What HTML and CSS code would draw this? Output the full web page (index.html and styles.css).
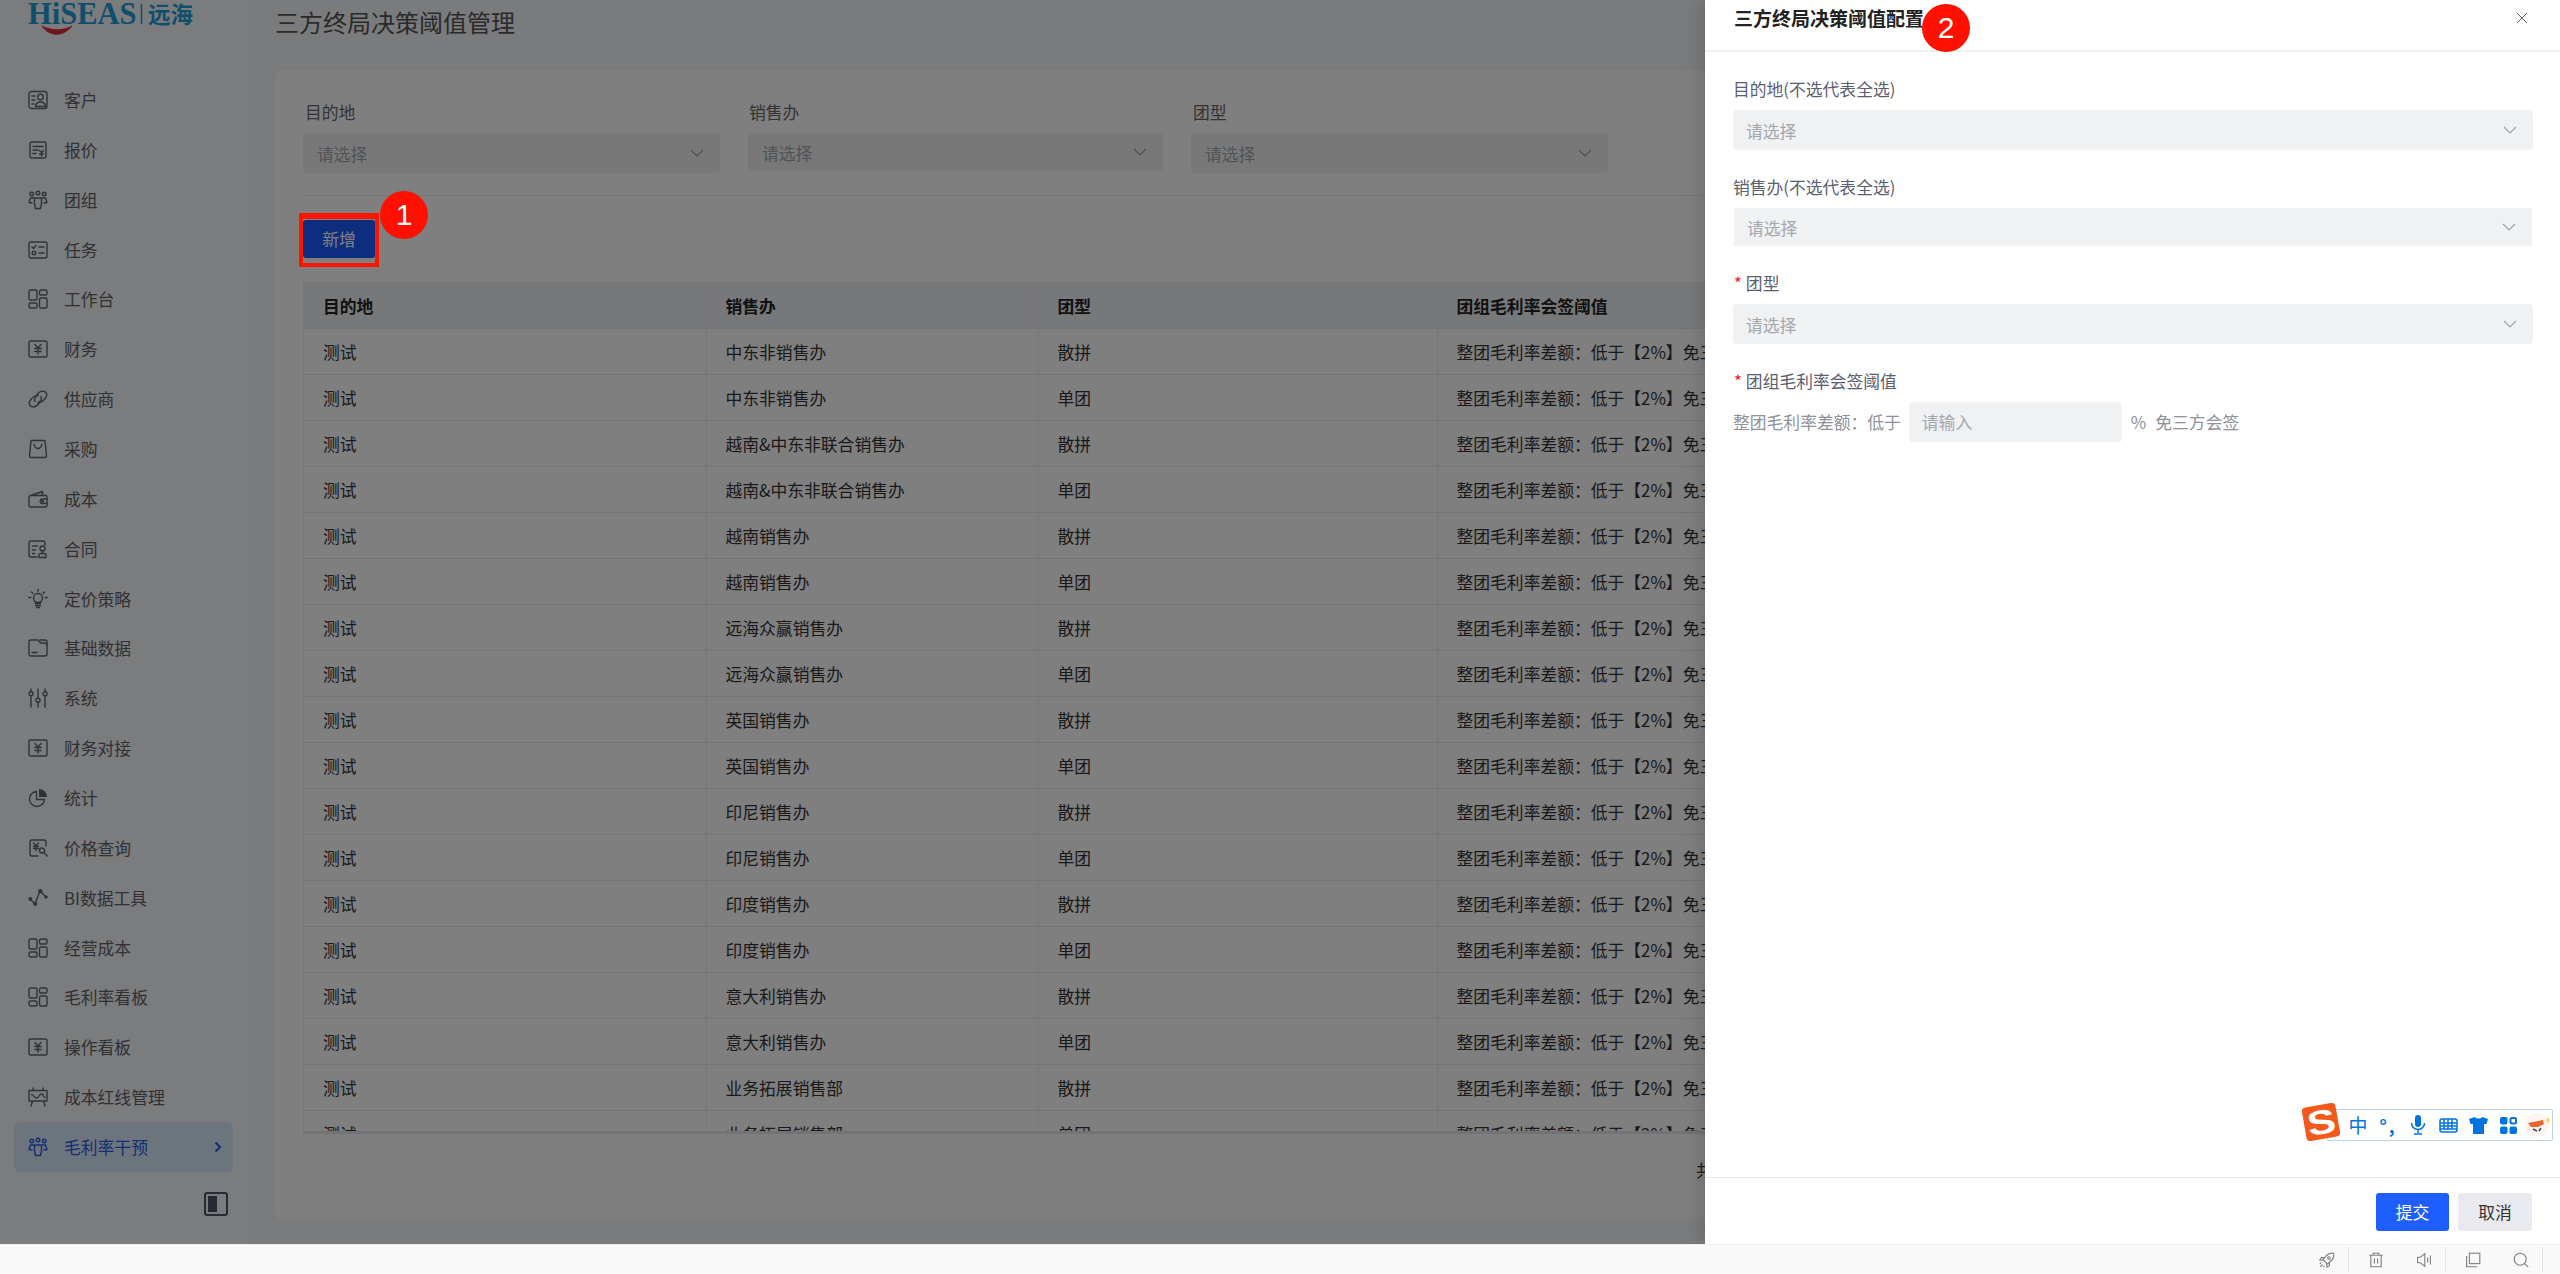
FILE: index.html
```html
<!DOCTYPE html>
<html lang="zh-CN">
<head>
  <meta charset="UTF-8" />
  <title>三方终局决策阈值管理</title>
  <link rel="stylesheet" href="styles.css">
</head>
<body>

<!-- icon set -->
<svg class="sprite" xmlns="http://www.w3.org/2000/svg">
  <symbol id="i-customer" viewBox="0 0 20 20"><rect x="1" y="1.500" width="18" height="17" rx="2.500"/><path d="M4 6h3M4 10h3M4 14h2"/><circle cx="12.500" cy="7" r="2.800"/><path d="M7.500 16.500c.4-3 2.400-4.500 5-4.500s4.600 1.500 5 4.500z"/></symbol>
  <symbol id="i-quote" viewBox="0 0 20 20"><rect x="2" y="2" width="16" height="16" rx="2"/><path d="M5 6.500h10M5 10h5M5 13.500h3M11.500 10.500l2 2 2-2M13.500 12.500v3.500M11.500 14h4"/></symbol>
  <symbol id="i-team" viewBox="0 0 20 20"><circle cx="10" cy="3" r="1.800"/><circle cx="3.800" cy="4" r="1.800"/><circle cx="16.200" cy="4" r="1.800"/><path d="M6.500 8h7v6l-1 4.500h-5l-1-4.500zM6.500 8H2.500L1 12.500l3 .5M13.500 8h4L19 12.500l-3 .5"/></symbol>
  <symbol id="i-task" viewBox="0 0 20 20"><rect x="1" y="2" width="18" height="16" rx="2"/><path d="M4 7l1.500 1.500L8 5.500M11 7h5M11 13h5"/><circle cx="6" cy="13" r="1.800"/></symbol>
  <symbol id="i-board" viewBox="0 0 20 20"><rect x="1" y="1" width="8" height="10" rx="1.500"/><rect x="11.500" y="1" width="7.500" height="5" rx="1.500"/><rect x="1" y="14" width="8" height="5" rx="1.500"/><rect x="11.500" y="9" width="7.500" height="10" rx="1.500"/></symbol>
  <symbol id="i-money" viewBox="0 0 20 20"><rect x="1" y="2" width="18" height="16" rx="1.500"/><path d="M7 5.500l3 3.500 3-3.500M10 9v6M6.800 9.500h6.400M6.800 12.500h6.400"/></symbol>
  <symbol id="i-link" viewBox="0 0 20 20"><path d="M9 5.500C11 3 14 1.500 16.500 2.500s3 4 1 6.500-5 5-7.500 4.500M11 14.500C9 17 6 18.500 3.500 17.500s-3-4-1-6.500 5-5 7.500-4.500"/><path d="M7 12.500c-1.500-2 .5-5 3-6.500M13 7.500c1.500 2-.5 5-3 6.500"/></symbol>
  <symbol id="i-bag" viewBox="0 0 20 20"><path d="M3 1.500h14l1.500 15.500a1.500 1.500 0 0 1-1.500 1.500H3A1.500 1.500 0 0 1 1.500 17z"/><path d="M6 5.500c1 3 2.500 4 4 4s3-1 4-4"/></symbol>
  <symbol id="i-wallet" viewBox="0 0 20 20"><path d="M3 6.500h14.500a1.500 1.500 0 0 1 1.500 1.500v8.500a1.500 1.500 0 0 1-1.500 1.500h-15A1.500 1.500 0 0 1 1 16.500V8.500c0-1 .7-1.700 1.500-2L14.500 2.500V6"/><path d="M19 10h-4.500a2 2 0 0 0 0 4.500H19"/><circle cx="14.700" cy="12.200" r=".8"/></symbol>
  <symbol id="i-contract" viewBox="0 0 20 20"><path d="M17 6V4a2 2 0 0 0-2-2H3a2 2 0 0 0-2 2v12a2 2 0 0 0 2 2h6"/><path d="M4.500 7h5M4.500 11h3M4.500 14.500h2"/><circle cx="14.500" cy="9.500" r="2.500"/><path d="M14.500 12v2M11 18.500v-2.500a1.500 1.500 0 0 1 1.500-1.500h4a1.500 1.500 0 0 1 1.500 1.500v2.500z"/></symbol>
  <symbol id="i-bulb" viewBox="0 0 20 20"><circle cx="10" cy="9" r="4.500"/><path d="M7.500 13v1.500h5V13M7.500 16.500h5M8.500 18.500h3M10 .5v1.700M3.500 3l1.300 1.300M16.500 3l-1.300 1.300M.8 8.500h2M17.200 8.500h2"/></symbol>
  <symbol id="i-folder" viewBox="0 0 20 20"><path d="M1 4a2 2 0 0 1 2-2h7l2.500 3H17a2 2 0 0 1 2 2v9a2 2 0 0 1-2 2H3a2 2 0 0 1-2-2z"/><path d="M12 2h5a2 2 0 0 1 2 2v3M4 14.500h5"/></symbol>
  <symbol id="i-sliders" viewBox="0 0 20 20"><path d="M3 1v2.500M3 8v11M10 1v9M10 14.500V19M17 1v2.500M17 8v11"/><circle cx="3" cy="5.800" r="2"/><circle cx="10" cy="12.300" r="2"/><circle cx="17" cy="5.800" r="2"/></symbol>
  <symbol id="i-pie" viewBox="0 0 20 20"><path d="M8.500 3.500a7.500 7.500 0 1 0 8 8h-8z"/><path class="solid" d="M11 1a8 8 0 0 1 8 8h-8z"/></symbol>
  <symbol id="i-price" viewBox="0 0 20 20"><path d="M18 8V4a2 2 0 0 0-2-2H4a2 2 0 0 0-2 2v12a2 2 0 0 0 2 2h6"/><path d="M5.500 5l2.500 3 2.500-3M8 8v4.500M5.500 8.500h5M5.500 10.500h5"/><circle cx="14" cy="12.500" r="2.500"/><path d="M16 14.500l3.200 3.500"/></symbol>
  <symbol id="i-bi" viewBox="0 0 20 20"><path d="M2 11l5 5 5-13 6 6"/><circle class="solid" cx="2.300" cy="11" r="1.900"/><circle class="solid" cx="7.300" cy="16" r="1.900"/><circle class="solid" cx="12.300" cy="3.200" r="2.200"/><circle class="solid" cx="18" cy="9" r="1.700"/></symbol>
  <symbol id="i-redline" viewBox="0 0 20 20"><path d="M5 1v2.500M15 1v2.500M1 3.500h18V14H1zM4.500 14l-1.500 5M15.500 14l1.500 5"/><path d="M3.500 7.500c1.500-1 2.500 3.500 5 3.500s2.500-4 5-4 1.500 3 3.500 3.500"/></symbol>
  <symbol id="i-rocket" viewBox="0 0 20 20"><path d="M18.500 1.500c-5-.5-8.500 1.500-11 5l-2.500 3 5.500 5.500 3-2.500c3.500-2.500 5.500-6 5-11z"/><circle cx="12.500" cy="7.500" r="1.600"/><path d="M6.500 7H3L1 10l4 .5M13 13.500V17l-3 2-.5-4M1.500 18.500l3-3M1 15l2-2M5 19l2-2"/></symbol>
  <symbol id="i-trash" viewBox="0 0 20 20"><path d="M1.500 4h17M6.500 4V1.500h7V4M3.500 4v14.500h13V4M8 8v6.500M12 8v6.500"/></symbol>
  <symbol id="i-speaker" viewBox="0 0 20 20"><path d="M2 6.500h3.500L11 2v16l-5.500-4.500H2zM14.500 7v6M18 4.500v11"/></symbol>
  <symbol id="i-copy" viewBox="0 0 20 20"><rect x="5.500" y="1.500" width="13" height="13"/><path d="M2 5v13.500h13"/></symbol>
  <symbol id="i-search" viewBox="0 0 20 20"><circle cx="9" cy="9" r="7.500"/><path d="M14.500 14.500l4.500 4.500"/></symbol>
</svg>

<div class="app">

  <aside class="sidebar">
    <div class="logo">
      <svg class="logo-art" width="176" height="40" viewBox="0 0 176 40">
        <text class="logo-en" x="0" y="24">HiSEAS</text>
        <path class="logo-bar" d="M113.500 4v20"/>
        <text class="logo-cn" x="120" y="23">远海</text>
        <path class="logo-smile" d="M14 26c8 11 21 11 30 0-8 5-22 5-30 0z"/>
      </svg>
    </div>
    <nav class="menu">
      <a class="menu-item"><svg class="menu-icon"><use href="#i-customer"/></svg>客户</a>
      <a class="menu-item"><svg class="menu-icon"><use href="#i-quote"/></svg>报价</a>
      <a class="menu-item"><svg class="menu-icon"><use href="#i-team"/></svg>团组</a>
      <a class="menu-item"><svg class="menu-icon"><use href="#i-task"/></svg>任务</a>
      <a class="menu-item"><svg class="menu-icon"><use href="#i-board"/></svg>工作台</a>
      <a class="menu-item"><svg class="menu-icon"><use href="#i-money"/></svg>财务</a>
      <a class="menu-item"><svg class="menu-icon"><use href="#i-link"/></svg>供应商</a>
      <a class="menu-item"><svg class="menu-icon"><use href="#i-bag"/></svg>采购</a>
      <a class="menu-item"><svg class="menu-icon"><use href="#i-wallet"/></svg>成本</a>
      <a class="menu-item"><svg class="menu-icon"><use href="#i-contract"/></svg>合同</a>
      <a class="menu-item"><svg class="menu-icon"><use href="#i-bulb"/></svg>定价策略</a>
      <a class="menu-item"><svg class="menu-icon"><use href="#i-folder"/></svg>基础数据</a>
      <a class="menu-item"><svg class="menu-icon"><use href="#i-sliders"/></svg>系统</a>
      <a class="menu-item"><svg class="menu-icon"><use href="#i-money"/></svg>财务对接</a>
      <a class="menu-item"><svg class="menu-icon"><use href="#i-pie"/></svg>统计</a>
      <a class="menu-item"><svg class="menu-icon"><use href="#i-price"/></svg>价格查询</a>
      <a class="menu-item"><svg class="menu-icon"><use href="#i-bi"/></svg>BI数据工具</a>
      <a class="menu-item"><svg class="menu-icon"><use href="#i-board"/></svg>经营成本</a>
      <a class="menu-item"><svg class="menu-icon"><use href="#i-board"/></svg>毛利率看板</a>
      <a class="menu-item"><svg class="menu-icon"><use href="#i-money"/></svg>操作看板</a>
      <a class="menu-item"><svg class="menu-icon"><use href="#i-redline"/></svg>成本红线管理</a>
      <a class="menu-item active"><svg class="menu-icon"><use href="#i-team"/></svg>毛利率干预
        <svg class="menu-arrow" width="8" height="12" viewBox="0 0 8 12"><path d="M1.500 1.500L6 6l-4.500 4.500"/></svg>
      </a>
    </nav>
    <div class="collapse">
      <svg width="24" height="24" viewBox="0 0 24 24"><rect class="collapse-frame" x="1" y="1" width="22" height="22" rx="2"/><rect class="collapse-fill" x="4" y="4" width="9" height="16"/></svg>
    </div>
  </aside>

  <main class="main">
    <h1 class="page-title">三方终局决策阈值管理</h1>
    <section class="card">
      <div class="filters">
        <div class="filter">
          <label class="filter-label">目的地</label>
          <div class="select"><span>请选择</span><svg class="chevron" viewBox="0 0 14 8"><path d="M1 1l6 6 6-6"/></svg></div>
        </div>
        <div class="filter">
          <label class="filter-label">销售办</label>
          <div class="select thin"><span>请选择</span><svg class="chevron" viewBox="0 0 14 8"><path d="M1 1l6 6 6-6"/></svg></div>
        </div>
        <div class="filter">
          <label class="filter-label">团型</label>
          <div class="select"><span>请选择</span><svg class="chevron" viewBox="0 0 14 8"><path d="M1 1l6 6 6-6"/></svg></div>
        </div>
      </div>
      <button class="btn-add">新增</button>
      <div class="table-wrap">
        <table class="grid">
          <colgroup><col class="c1"><col class="c2"><col class="c3"><col></colgroup>
          <thead><tr><th>目的地</th><th>销售办</th><th>团型</th><th>团组毛利率会签阈值</th></tr></thead>
          <tbody>
            <tr><td>测试</td><td>中东非销售办</td><td>散拼</td><td>整团毛利率差额：低于【2%】免三方会签</td></tr>
            <tr><td>测试</td><td>中东非销售办</td><td>单团</td><td>整团毛利率差额：低于【2%】免三方会签</td></tr>
            <tr><td>测试</td><td>越南&amp;中东非联合销售办</td><td>散拼</td><td>整团毛利率差额：低于【2%】免三方会签</td></tr>
            <tr><td>测试</td><td>越南&amp;中东非联合销售办</td><td>单团</td><td>整团毛利率差额：低于【2%】免三方会签</td></tr>
            <tr><td>测试</td><td>越南销售办</td><td>散拼</td><td>整团毛利率差额：低于【2%】免三方会签</td></tr>
            <tr><td>测试</td><td>越南销售办</td><td>单团</td><td>整团毛利率差额：低于【2%】免三方会签</td></tr>
            <tr><td>测试</td><td>远海众赢销售办</td><td>散拼</td><td>整团毛利率差额：低于【2%】免三方会签</td></tr>
            <tr><td>测试</td><td>远海众赢销售办</td><td>单团</td><td>整团毛利率差额：低于【2%】免三方会签</td></tr>
            <tr><td>测试</td><td>英国销售办</td><td>散拼</td><td>整团毛利率差额：低于【2%】免三方会签</td></tr>
            <tr><td>测试</td><td>英国销售办</td><td>单团</td><td>整团毛利率差额：低于【2%】免三方会签</td></tr>
            <tr><td>测试</td><td>印尼销售办</td><td>散拼</td><td>整团毛利率差额：低于【2%】免三方会签</td></tr>
            <tr><td>测试</td><td>印尼销售办</td><td>单团</td><td>整团毛利率差额：低于【2%】免三方会签</td></tr>
            <tr><td>测试</td><td>印度销售办</td><td>散拼</td><td>整团毛利率差额：低于【2%】免三方会签</td></tr>
            <tr><td>测试</td><td>印度销售办</td><td>单团</td><td>整团毛利率差额：低于【2%】免三方会签</td></tr>
            <tr><td>测试</td><td>意大利销售办</td><td>散拼</td><td>整团毛利率差额：低于【2%】免三方会签</td></tr>
            <tr><td>测试</td><td>意大利销售办</td><td>单团</td><td>整团毛利率差额：低于【2%】免三方会签</td></tr>
            <tr><td>测试</td><td>业务拓展销售部</td><td>散拼</td><td>整团毛利率差额：低于【2%】免三方会签</td></tr>
            <tr><td>测试</td><td>业务拓展销售部</td><td>单团</td><td>整团毛利率差额：低于【2%】免三方会签</td></tr>
          </tbody>
        </table>
      </div>
      <div class="pager">共 18 条</div>
    </section>
  </main>

  <div class="mask"></div>

  <!-- right drawer -->
  <aside class="drawer">
    <header class="drawer-head">
      <h2 class="drawer-title">三方终局决策阈值配置</h2>
      <svg class="drawer-close" width="12" height="12" viewBox="0 0 12 12"><path d="M1 1l10 10M11 1L1 11"/></svg>
    </header>
    <div class="drawer-body">
      <div class="field">
        <label class="field-label">目的地(不选代表全选)</label>
        <div class="select"><span>请选择</span><svg class="chevron" viewBox="0 0 14 8"><path d="M1 1l6 6 6-6"/></svg></div>
      </div>
      <div class="field">
        <label class="field-label">销售办(不选代表全选)</label>
        <div class="select thin"><span>请选择</span><svg class="chevron" viewBox="0 0 14 8"><path d="M1 1l6 6 6-6"/></svg></div>
      </div>
      <div class="field">
        <label class="field-label"><i class="star">*</i>团型</label>
        <div class="select"><span>请选择</span><svg class="chevron" viewBox="0 0 14 8"><path d="M1 1l6 6 6-6"/></svg></div>
      </div>
      <div class="field">
        <label class="field-label"><i class="star">*</i>团组毛利率会签阈值</label>
        <div class="threshold">
          <span>整团毛利率差额：低于</span>
          <div class="text-input">请输入</div>
          <span class="unit">%</span>
          <span>免三方会签</span>
        </div>
      </div>
    </div>
    <footer class="drawer-foot">
      <button class="btn btn-primary">提交</button>
      <button class="btn btn-cancel">取消</button>
    </footer>
  </aside>

  <!-- red annotations on top of the screenshot -->
  <div class="mark-box"></div>
  <div class="mark mark-1">1</div>
  <div class="mark mark-2">2</div>

  <!-- input method bar -->
  <div class="ime">
    <div class="ime-logo"><span>S</span></div>
    <span class="ime-item ime-zh">中</span>
    <span class="ime-item ime-punct">°,</span>
    <span class="ime-item">
      <svg width="16" height="20" viewBox="0 0 16 20"><rect class="ime-solid" x="5" y="0" width="6" height="12" rx="3"/><path d="M1.500 8a6.500 6.500 0 0 0 13 0M8 14.500V18M4 19h8"/></svg>
    </span>
    <span class="ime-item">
      <svg width="19" height="15" viewBox="0 0 19 15"><rect x="1" y="1" width="17" height="13" rx="2"/><path d="M1 5h17M1 8h17M1 11h17M5 1v10M9 1v10M13 1v10"/></svg>
    </span>
    <span class="ime-item">
      <svg width="19" height="17" viewBox="0 0 19 17"><path class="ime-solid" d="M6 0c1 2 6 2 7 0l6 2-1.500 5H15v10H4V7H1.500L0 2z"/></svg>
    </span>
    <span class="ime-item">
      <svg width="17" height="17" viewBox="0 0 17 17"><rect class="ime-solid" x="0" y="0" width="7.500" height="7.500" rx="2"/><rect class="ime-hollow" x="10.500" y="1" width="5.500" height="5.500" rx="1.500"/><rect class="ime-solid" x="0" y="9.500" width="7.500" height="7.500" rx="2"/><rect class="ime-solid" x="9.500" y="9.500" width="7.500" height="7.500" rx="2"/></svg>
    </span>
    <span class="ime-item">
      <svg width="26" height="26" viewBox="0 0 26 26"><circle cx="12" cy="13" r="12" fill="#fbf4f0"/><path d="M3 11l15-3 1 4-6 3H6z" fill="#e8642c"/><path d="M8 17l4 2M14 19l2-3" stroke="#444" fill="none" stroke-width="1.500"/><path d="M23 5l1 2.500 2 .5-2 1-1 2.500-1-2.500-2-1 2-.5z" fill="#f6d34a"/></svg>
    </span>
  </div>
</div>

<footer class="taskbar">
  <div class="task-group"><svg class="task-icon"><use href="#i-rocket"/></svg></div>
  <div class="task-group"><svg class="task-icon"><use href="#i-trash"/></svg><svg class="task-icon"><use href="#i-speaker"/></svg></div>
  <div class="task-group"><svg class="task-icon"><use href="#i-copy"/></svg><svg class="task-icon"><use href="#i-search"/></svg></div>
</footer>

</body>
</html>
```

FILE: styles.css
```css
* {
  box-sizing: border-box;
}

html, body {
  margin: 0;
  height: 1274px;
  overflow: hidden;
}

body {
  font-family: "Noto Sans CJK SC", "Noto Sans", sans-serif;
  font-size: 16.8px;
  color: #333;
  background: #f9f9f9;
}

.sprite {
  display: none;
}

.app {
  position: relative;
  display: flex;
  height: 1244px;
  overflow: hidden;
  background: #f4f6f9;
}

/* sidebar */
.sidebar {
  width: 247px;
  flex: none;
  background: #f7f8fa;
}

.logo {
  height: 75px;
  padding-left: 28px;
}

.logo-art {
  display: block;
}

.logo-en {
  font-family: "Liberation Serif", serif;
  font-weight: bold;
  font-size: 30.5px;
  fill: #1e9ed8;
}

.logo-cn {
  font-family: "Noto Sans CJK SC", sans-serif;
  font-weight: bold;
  font-size: 22.5px;
  fill: #1e9ed8;
}

.logo-bar {
  stroke: #1e9ed8;
  stroke-width: 1.5;
}

.logo-smile {
  fill: #e0283c;
  stroke: #e0283c;
}

.menu-item {
  display: flex;
  align-items: center;
  gap: 16px;
  height: 49.86px;
  margin: 0 14px;
  padding-left: 14px;
  border-radius: 6px;
  color: #5f636b;
}

.menu-icon {
  width: 20px;
  height: 20px;
  flex: none;
  fill: none;
  stroke: #5f6673;
  stroke-width: 1.4;
  stroke-linecap: round;
  stroke-linejoin: round;
}

.solid {
  fill: #5f6673;
  stroke: none;
}

.menu-item.active {
  background: #d9e8fb;
  color: #2a5fe0;
}

.menu-item.active .menu-icon {
  stroke: #2a5fe0;
}

.menu-arrow {
  margin-left: auto;
  margin-right: 11px;
  fill: none;
  stroke: #2a5fe0;
  stroke-width: 2.2;
}

.collapse {
  display: flex;
  justify-content: flex-end;
  padding: 20px 19px 0 0;
}

.collapse-frame {
  fill: none;
  stroke: #4e5969;
  stroke-width: 2;
}

.collapse-fill {
  fill: #4e5969;
}

/* main area */
.main {
  flex: 1;
  min-width: 0;
  padding: 0 28px 24px;
  display: flex;
  flex-direction: column;
}

.page-title {
  margin: 0 0 26px;
  font-size: 24px;
  font-weight: normal;
  line-height: 44px;
  color: #555;
}

.card {
  flex: 1;
  min-height: 0;
  padding: 30px 28px 0;
  background: #fff;
  border-radius: 8px;
  overflow: hidden;
}

.filters {
  display: flex;
  gap: 27px;
  padding-bottom: 22px;
  border-bottom: 1px solid #ebedf0;
  margin-bottom: 24px;
}

.filter {
  width: 417px;
}

.filter-label {
  display: block;
  height: 24px;
  line-height: 24px;
  margin-bottom: 9px;
  padding-left: 2px;
  color: #666;
}

.select {
  display: flex;
  align-items: center;
  justify-content: space-between;
  height: 40px;
  padding: 2px 16px 0 14px;
  background: #f0f1f3;
  border-radius: 4px;
  color: #a3a7ae;
}

.select.thin {
  height: 38px;
  margin: 1px;
  border-radius: 0;
}

.chevron {
  width: 14px;
  height: 8px;
  margin-top: -2px;
  fill: none;
  stroke: #9a9ea6;
  stroke-width: 1.1;
}

.btn-add {
  display: block;
  width: 72px;
  height: 38px;
  padding: 0;
  border: none;
  border-radius: 3px;
  background: #1a5cff;
  color: #fff;
  font: inherit;
}

.table-wrap {
  height: 852px;
  margin-top: 24px;
  overflow: hidden;
  border-left: 1px solid #eeeff2;
  border-bottom: 3px solid #e6e6ea;
}

.grid {
  width: 2229px;
  table-layout: fixed;
  border-collapse: collapse;
}

.c1 {
  width: 402px;
}

.c2 {
  width: 332px;
}

.c3 {
  width: 399px;
}

.grid th,
.grid td {
  height: 46px;
  padding: 2px 19px 0;
  text-align: left;
  white-space: nowrap;
  border-right: 1px solid #eeeff2;
  border-bottom: 1px solid #e8e9ec;
}

.grid th {
  background: #eef0f4;
  color: #222;
  font-weight: bold;
}

.grid td {
  color: #333;
}

.pager {
  margin: 24px 0 0 1393px;
  white-space: nowrap;
}

/* drawer and mask */
.mask {
  position: absolute;
  inset: 0;
  background: rgba(0, 0, 0, .5);
}

.drawer {
  position: absolute;
  top: 0;
  right: 0;
  bottom: 0;
  width: 855px;
  display: flex;
  flex-direction: column;
  background: #fff;
  box-shadow: -6px 0 16px rgba(0, 0, 0, .12);
}

.drawer-head {
  display: flex;
  justify-content: space-between;
  height: 52px;
  padding: 0 32px 0 29px;
  border-bottom: 2px solid #f0f0f0;
}

.drawer-title {
  margin: 0;
  font-size: 19px;
  font-weight: bold;
  line-height: 35px;
  color: #222;
}

.drawer-close {
  margin-top: 12px;
  fill: none;
  stroke: #555;
  stroke-width: .9;
}

.drawer-body {
  flex: 1;
  padding: 25px 27px 0 28px;
}

.drawer-body .select {
  padding-left: 13px;
}

.field {
  margin-bottom: 25px;
}

.field-label {
  display: block;
  height: 24px;
  line-height: 24px;
  margin-bottom: 9px;
  color: #5a6070;
}

.star {
  margin: 0 4px 0 1px;
  font-style: normal;
  color: #f5222d;
}

.threshold {
  display: flex;
  align-items: center;
  color: #8e9299;
  white-space: nowrap;
}

.text-input {
  width: 213px;
  height: 40px;
  margin: 0 9px 0 8px;
  padding-left: 13px;
  line-height: 40px;
  background: #f0f1f3;
  border-radius: 4px;
  color: #a3a7ae;
}

.unit {
  margin-right: 9px;
}

.drawer-foot {
  display: flex;
  justify-content: flex-end;
  gap: 9px;
  height: 67px;
  padding: 15px 28px 0 0;
  border-top: 1px solid #e8e8e8;
}

.btn {
  width: 73px;
  height: 38px;
  padding: 0;
  border: none;
  border-radius: 3px;
  font: inherit;
}

.btn-primary {
  background: #1e5eff;
  color: #fff;
}

.btn-cancel {
  width: 74px;
  background: #e9eaef;
  color: #333;
}

/* annotations */
.mark-box {
  position: absolute;
  left: 299px;
  top: 213px;
  width: 80px;
  height: 54px;
  border: solid #ff1400;
  border-width: 6px 4px 4px;
}

.mark {
  position: absolute;
  width: 48px;
  height: 48px;
  border-radius: 50%;
  background: #ff1000;
  color: #fff;
  font-family: "Liberation Sans", sans-serif;
  font-size: 30px;
  line-height: 48px;
  text-align: center;
}

.mark-1 {
  left: 380px;
  top: 191px;
}

.mark-2 {
  left: 1922px;
  top: 4px;
}

/* input method bar */
.ime {
  position: absolute;
  left: 2327px;
  top: 1109px;
  width: 226px;
  height: 32px;
  display: flex;
  align-items: center;
  padding-left: 15px;
  background: #fff;
  border: 1px solid #bcd2e8;
  border-radius: 2px;
}

.ime-logo {
  position: absolute;
  left: -24px;
  top: -5px;
  width: 34px;
  height: 34px;
  display: flex;
  align-items: center;
  justify-content: center;
  border-radius: 4px;
  background: #f4591c;
  transform: rotate(-10deg);
}

.ime-logo span {
  color: #fff;
  font-family: "Liberation Sans", sans-serif;
  font-weight: bold;
  font-size: 34px;
  line-height: 34px;
  transform: scaleX(1.25);
}

.ime-item {
  width: 30px;
  flex: none;
  display: flex;
  align-items: center;
  justify-content: center;
  color: #0073e0;
}

.ime-item svg {
  fill: none;
  stroke: #0073e0;
  stroke-width: 1.5;
  overflow: visible;
}

.ime-item:last-child svg {
  stroke: none;
}

.ime-zh {
  font-size: 19px;
  line-height: 30px;
}

.ime-punct {
  font-size: 18px;
  font-weight: bold;
  line-height: 30px;
  letter-spacing: 2px;
}

.ime-solid {
  fill: #0073e0;
  stroke: none;
}

.ime-hollow {
  fill: none;
  stroke: #0073e0;
  stroke-width: 2;
}

/* bottom bar */
.taskbar {
  display: flex;
  justify-content: flex-end;
  align-items: center;
  height: 30px;
  padding-right: 17px;
  background: #f9f9f9;
  border-top: 1px solid #eeeeee;
}

.task-group {
  display: flex;
  align-items: center;
  gap: 32px;
  height: 26px;
  padding: 0 13px 0 19px;
  border-right: 1px solid #e4e4e4;
}

.task-icon {
  width: 16px;
  height: 16px;
  fill: none;
  stroke: #808080;
  stroke-width: 1.4;
}
```
